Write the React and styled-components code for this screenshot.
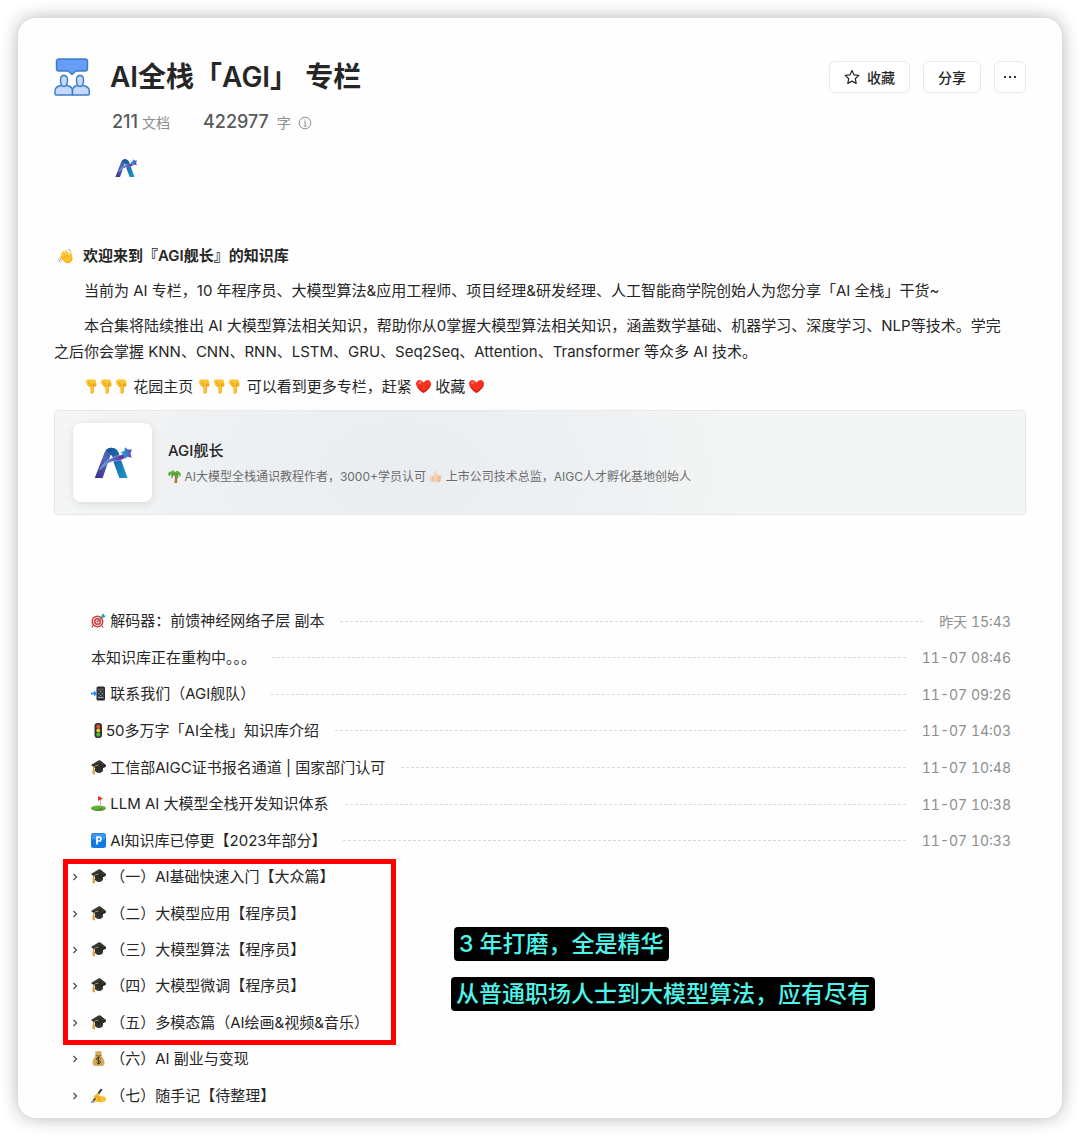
import React from 'react'
import styled, { createGlobalStyle } from 'styled-components'

const docs = [
  { icon: 'dart', title: ' 解码器：前馈神经网络子层 副本', time: '昨天 15:43' },
  { title: '本知识库正在重构中。。。', time: '11-07 08:46' },
  { icon: 'phone', title: ' 联系我们（AGI舰队）', time: '11-07 09:26' },
  { icon: 'light', title: '50多万字「AI全栈」知识库介绍', time: '11-07 14:03' },
  { icon: 'cap', title: ' 工信部AIGC证书报名通道 | 国家部门认可', time: '11-07 10:48' },
  { icon: 'golf', title: ' LLM AI 大模型全栈开发知识体系', time: '11-07 10:38' },
  { icon: 'parking', title: ' AI知识库已停更【2023年部分】', time: '11-07 10:33' },
]

const chapters = [
  { icon: 'cap', title: ' （一）AI基础快速入门【大众篇】' },
  { icon: 'cap', title: ' （二）大模型应用【程序员】' },
  { icon: 'cap', title: ' （三）大模型算法【程序员】' },
  { icon: 'cap', title: ' （四）大模型微调【程序员】' },
  { icon: 'cap', title: ' （五）多模态篇（AI绘画&视频&音乐）' },
  { icon: 'money', title: ' （六）AI 副业与变现' },
  { icon: 'write', title: ' （七）随手记【待整理】' },
]

// all emoji share a 30 x 30 grid
const emojis = {
  wave: {
    label: '挥手',
    art: (
      <>
        <path d="M8 15 L5 10 Q5 7 8 8 L12 13 L8 6 Q9 3 12 5 L18 12 L13 4 Q15 1 18 4 L24 13 L23 7 Q25 4 27 8 L29 18 Q29 25 23 28 Q17 30 12 25 L4 17 Q3 14 6 14 Z" fill="#fcc52f" />
        <path d="M12 13 L17 18 M18 12 L21 16 M8 15 L14 21" stroke="#d98c15" strokeWidth="1.4" fill="none" />
        <path d="M13 25 Q19 29 24 26 Q28 23 28 18" stroke="#e7a01f" strokeWidth="1.6" fill="none" />
        <path d="M20 1 Q25 1 26 5 M1 19 Q1 25 6 27 M4 18 Q5 22 8 24" stroke="#8f9aa3" strokeWidth="1.5" fill="none" />
      </>
    ),
  },
  down: {
    label: '向下',
    art: (
      <>
        <path d="M7 1 H22 Q24 4 25 9 V14 Q24 16 21 15 L19 15 V27 Q16 31 13 27 L12 16 Q7 15 5 10 L4 5 Q4 2 7 1 Z" fill="#fdc230" />
        <path d="M8 7 Q13 8 13 13 Q12 16 10 14 M19 9 V16 M22 9 V15" stroke="#d98a18" strokeWidth="1.5" fill="none" />
        <path d="M19 16 V27 Q16 30 13 27" stroke="#eda420" strokeWidth="1.5" fill="none" />
      </>
    ),
  },
  heart: {
    label: '爱心',
    art: (
      <>
        <path d="M15 28 Q0 18 0 9 Q1 2 7 2 Q12 2 15 7 Q18 2 23 2 Q29 2 30 9 Q30 18 15 28 Z" fill="#f5311f" />
        <path d="M4 9 Q4 5 8 5 Q11 5 12 7 Q9 11 4 9 Z" fill="#ff7566" />
        <path d="M15 28 Q30 18 30 9 Q25 20 15 24 Q7 21 2 15 Q5 22 15 28 Z" fill="#d91d13" />
      </>
    ),
  },
  palm: {
    label: '棕榈树',
    art: (
      <>
        <path d="M13 8 Q18 17 15 30 L21 30 Q23 17 17 8 Z" fill="#a9713f" />
        <path d="M15 7 Q8 -1 1 7 Q0 12 3 15 Q5 9 9 10 Q6 15 9 20 Q11 13 16 10 Q21 13 22 20 Q26 15 23 10 Q27 10 28 16 Q32 8 25 4 Q20 0 16 6 Q14 0 9 1 Z" fill="#45a32c" />
        <path d="M4 8 Q10 3 15 9 Q21 3 26 8" stroke="#7bc943" strokeWidth="1.5" fill="none" />
      </>
    ),
  },
  thumb: {
    label: '点赞',
    art: (
      <>
        <path d="M2 14 L9 13 L15 2 Q19 0 19 6 L18 11 L26 11 Q30 12 28 16 L27 26 Q26 29 22 29 L10 28 L2 27 Z" fill="#f8d3b4" />
        <path d="M18 16 L28 16 M18 20 L27 20 M18 24 L26 24 M9 14 L9 26" stroke="#d89f7a" strokeWidth="1.5" fill="none" />
      </>
    ),
  },
  dart: {
    label: '靶心',
    art: (
      <>
        <path d="M4 25 L2 29 M22 25 L24 29" stroke="#8b3a30" strokeWidth="2" />
        <circle cx="13" cy="17" r="12" fill="#d83a35" />
        <circle cx="13" cy="17" r="9" fill="#f2eeee" />
        <circle cx="13" cy="17" r="7" fill="#d83a35" />
        <circle cx="13" cy="17" r="4" fill="#f2eeee" />
        <circle cx="13" cy="17" r="2" fill="#d83a35" />
        <path d="M13 17 L24 7" stroke="#3a6b7b" strokeWidth="2" />
        <path d="M20 8 L22 3 L26 1 L26 5 L30 5 L27 9 L22 10 Z" fill="#35a6b8" />
      </>
    ),
  },
  phone: {
    label: '手机',
    art: (
      <>
        <rect x="11" y="1" width="17" height="28" rx="3" fill="#26282c" />
        <rect x="13" y="4" width="13" height="22" fill="#3d4148" />
        <path d="M0 13 H6 V9 L13 15 L6 21 V17 H0 Z" fill="#2b8ef0" />
        <path d="M15 7 h2 M21 7 h2" stroke="#e45b4f" strokeWidth="2" />
        <path d="M18 11 h2 M15 15 h2" stroke="#6cc86b" strokeWidth="2" />
        <path d="M22 15 h2 M18 19 h2" stroke="#4a9be8" strokeWidth="2" />
        <path d="M14 23 h11" stroke="#9aa0a8" strokeWidth="2" />
      </>
    ),
  },
  light: {
    label: '红绿灯',
    art: (
      <>
        <rect x="7" y="0" width="15" height="30" rx="6" fill="#35332f" />
        <circle cx="14.500" cy="7" r="4" fill="#ee4b3e" />
        <circle cx="14.500" cy="15" r="4" fill="#f6c22f" />
        <circle cx="14.500" cy="23" r="4" fill="#3fc13f" />
      </>
    ),
  },
  cap: {
    label: '学士帽',
    art: (
      <>
        <path d="M8 12 L8 22 Q12 27 17 26 Q23 25 24 21 L24 12 Z" fill="#34342f" />
        <path d="M0 10 L15 1 Q18 0 20 2 L30 10 Q31 13 29 14 L16 20 Q13 21 11 18 Z" fill="#2b2b29" />
        <path d="M3 10 L16 4 L27 11" stroke="#55554f" strokeWidth="1.2" fill="none" />
        <path d="M15 10 Q7 11 5 15 L5 21" stroke="#c98a3c" strokeWidth="2" fill="none" />
        <path d="M3 19 L8 19 L8 29 L3 28 Z" fill="#e0a045" />
      </>
    ),
  },
  golf: {
    label: '高尔夫',
    art: (
      <>
        <ellipse cx="15" cy="24" rx="15" ry="5" fill="#67b32e" />
        <path d="M0 24 Q2 30 15 30 Q28 30 30 24 Q25 27 15 27 Q5 27 0 24 Z" fill="#4a8d22" />
        <ellipse cx="19" cy="24" rx="3" ry="1.3" fill="#3a6a1d" />
        <path d="M19 1 V24" stroke="#b0b0b0" strokeWidth="1.6" />
        <path d="M14 0 L24 5 L14 10 Z" fill="#e3352b" />
      </>
    ),
  },
  parking: {
    label: '停车',
    art: (
      <>
        <rect x="0" y="0" width="30" height="30" rx="5" fill="#1378e4" />
        <rect x="1" y="1" width="28" height="12" rx="4" fill="#3c97f2" />
        <path d="M12 23 V8 H16 Q20 8 20 12 Q20 16 16 16 H12" stroke="#ffffff" strokeWidth="3.4" fill="none" />
      </>
    ),
  },
  money: {
    label: '钱袋',
    art: (
      <>
        <path d="M10 9 Q7 3 9 1 Q15 -1 21 1 Q23 4 20 9 Q27 16 27 24 Q27 30 21 30 H9 Q3 30 3 24 Q3 16 10 9 Z" fill="#d3ab5c" />
        <path d="M9 9 Q15 11 21 9" stroke="#7d5b22" strokeWidth="2" fill="none" />
        <path d="M19 15 Q17 13 15 13 Q11 13 11 16 Q11 19 15 19 Q19 20 19 22 Q19 25 15 25 Q12 25 11 23 M15 11 V27" stroke="#4b3714" strokeWidth="2" fill="none" />
      </>
    ),
  },
  write: {
    label: '书写',
    art: (
      <>
        <path d="M2 27 L18 3 Q21 0 23 3 L8 25 Z" fill="#3b3b3d" />
        <path d="M5 17 L12 11 Q17 9 17 13 L15 16 L27 17 Q31 20 30 25 Q24 30 16 28 L9 28 Q6 26 8 24 L12 23 L9 21 Q5 21 5 17 Z" fill="#fbbf2b" />
        <path d="M9 18 L15 18 M12 23 L18 23 M15 16 Q19 18 17 21" stroke="#d28a14" strokeWidth="1.4" fill="none" />
        <path d="M0 28 H7" stroke="#4b4b4d" strokeWidth="1.8" />
      </>
    ),
  },
}

function Emoji({ name }) {
  const { label, art } = emojis[name]
  return (
    <EmojiSvg viewBox="0 0 30 30" role="img" aria-label={label}>
      {art}
    </EmojiSvg>
  )
}

function Logo({ id, size }) {
  return (
    <LogoSvg viewBox="0 0 120 100" $size={size} role="img" aria-label="AGI舰长">
      <defs>
        <linearGradient id={id + 'Left'} x1="0" y1="1" x2="1" y2="0">
          <stop offset="0" stopColor="#3a2a8c" />
          <stop offset="0.5" stopColor="#5566b8" />
          <stop offset="1" stopColor="#0f5aa0" />
        </linearGradient>
        <linearGradient id={id + 'Right'} x1="0" y1="0" x2="1" y2="1">
          <stop offset="0" stopColor="#154f96" />
          <stop offset="1" stopColor="#1c97c6" />
        </linearGradient>
        <linearGradient id={id + 'Swoosh'} x1="0" y1="0" x2="1" y2="0">
          <stop offset="0" stopColor="#3fa7dd" />
          <stop offset="0.5" stopColor="#5b6cc4" />
          <stop offset="1" stopColor="#6c2494" />
        </linearGradient>
        <linearGradient id={id + 'Star'} x1="0" y1="0" x2="1" y2="0">
          <stop offset="0" stopColor="#28a9dc" />
          <stop offset="0.6" stopColor="#3b74c4" />
          <stop offset="1" stopColor="#7d3aa8" />
        </linearGradient>
      </defs>
      <path d="M2 99 L33 18 Q40 2 56 2 Q71 3 76 16 L82 30 L62 36 L53 24 L27 99 Z" fill={`url(#${id}Left)`} />
      <path d="M38 9 Q45 2 56 2 Q71 3 77 17 L106 98 L80 98 L61 46 L70 33 L54 22 Q46 20 38 9 Z" fill={`url(#${id}Right)`} />
      <path d="M18 72 Q36 38 70 29 Q84 27 92 22 Q101 33 91 39 Q78 45 60 45 Q38 50 18 72 Z" fill={`url(#${id}Swoosh)`} stroke="#ffffff" strokeWidth="1" />
      <path d="M98 1 L107 8 L120 8 L115 20 L119 34 L106 31 L95 38 L94 26 L84 16 L96 13 Z" fill={`url(#${id}Star)`} />
    </LogoSvg>
  )
}

function GroupIcon() {
  return (
    <GroupSvg viewBox="0 0 36 38" aria-hidden="true">
      <g stroke="#3b7dc4" strokeWidth="1.4" strokeLinejoin="round">
        <path d="M5 1 H31 Q33.500 1 33.500 3.500 V10.500 Q33.500 13 31 13 H22 L18 16.500 L14 13 H5 Q2.500 13 2.500 10.500 V3.500 Q2.500 1 5 1 Z" fill="#669df6" />
        <path d="M1 36 V33 Q1 28.500 7 27.500 H13 Q18.500 28.500 18.500 33 V37 H2 Q1 37 1 36 Z" fill="#c3dafe" />
        <path d="M18.500 37 V33 Q18.500 28.500 23 27.500 H29 Q35.300 28.500 35.300 33 V36 Q35.300 37 34.300 37 Z" fill="#c3dafe" />
        <path d="M6.500 22 Q6.500 17.500 10 17.500 Q13.500 17.500 13.500 22 Q13.500 28.500 10 28.500 Q6.500 28.500 6.500 22 Z" fill="#c3dafe" />
        <path d="M22.500 22 Q22.500 17.500 26 17.500 Q29.500 17.500 29.500 22 Q29.500 28.500 26 28.500 Q22.500 28.500 22.500 22 Z" fill="#c3dafe" />
      </g>
    </GroupSvg>
  )
}

export default function App() {
  return (
    <>
      <GlobalStyle />
      <Page>
        <Panel>
          <Header>
            <GroupIcon />
            <Title>AI全栈「AGI」 专栏</Title>
            <Actions>
              <Button>
                <svg width="16" height="16" viewBox="0 0 16 16" aria-hidden="true">
                  <path d="M8 1.500 L10 5.800 L14.800 6.400 L11.300 9.700 L12.200 14.400 L8 12.100 L3.800 14.400 L4.700 9.700 L1.200 6.400 L6 5.800 Z" fill="none" stroke="#262626" strokeWidth="1.200" strokeLinejoin="round" />
                </svg>
                收藏
              </Button>
              <Button>分享</Button>
              <IconButton aria-label="更多">
                <svg width="14" height="14" viewBox="0 0 14 14" aria-hidden="true">
                  <circle cx="2" cy="7" r="1.100" />
                  <circle cx="7" cy="7" r="1.100" />
                  <circle cx="12" cy="7" r="1.100" />
                </svg>
              </IconButton>
            </Actions>
          </Header>

          <Stats>
            <Stat>
              <strong>211</strong> 文档
            </Stat>
            <Stat>
              <strong>422977</strong>&nbsp; 字
              <InfoSvg viewBox="0 0 14 14" aria-hidden="true">
                <circle cx="7" cy="7" r="5.800" />
                <path d="M6 6 H7.200 V10 M5.700 10 H8.600 M7 3.600 V4.700" />
              </InfoSvg>
            </Stat>
          </Stats>
          <Members>
            <Logo id="member" size={22} />
          </Members>

          <Article>
            <Welcome>
              <Emoji name="wave" />
              欢迎来到『AGI舰长』的知识库
            </Welcome>
            <Paragraph>当前为 AI 专栏，10 年程序员、大模型算法&应用工程师、项目经理&研发经理、人工智能商学院创始人为您分享「AI 全栈」干货~</Paragraph>
            <Paragraph>本合集将陆续推出 AI 大模型算法相关知识，帮助你从0掌握大模型算法相关知识，涵盖数学基础、机器学习、深度学习、NLP等技术。学完之后你会掌握 KNN、CNN、RNN、LSTM、GRU、Seq2Seq、Attention、Transformer 等众多 AI 技术。</Paragraph>
            <Paragraph>
              <Emoji name="down" /><Emoji name="down" /><Emoji name="down" /> 花园主页 <Emoji name="down" /><Emoji name="down" /><Emoji name="down" /> 可以看到更多专栏，赶紧 <Emoji name="heart" /> 收藏 <Emoji name="heart" />
            </Paragraph>
          </Article>

          <ProfileCard href="#profile">
            <Avatar>
              <Logo id="profile" size={38} />
            </Avatar>
            <ProfileInfo>
              <Nickname>AGI舰长</Nickname>
              <Intro>
                <Emoji name="palm" /> AI大模型全栈通识教程作者，3000+学员认可 <Emoji name="thumb" /> 上市公司技术总监，AIGC人才孵化基地创始人
              </Intro>
            </ProfileInfo>
          </ProfileCard>

          <DocList>
            {docs.map((doc) => (
              <DocRow key={doc.title}>
                <DocLink href="#doc">
                  {doc.icon && <Emoji name={doc.icon} />}
                  {doc.title}
                </DocLink>
                <Dashes />
                <Time>{doc.time}</Time>
              </DocRow>
            ))}
          </DocList>

          <ChapterArea>
            <ChapterList>
              {chapters.map((chapter) => (
                <ChapterRow key={chapter.title}>
                  <Toggle aria-label="展开">
                    <svg width="6" height="8" viewBox="0 0 6 8" aria-hidden="true">
                      <path d="M1.500 1 L4.500 4 L1.500 7" fill="none" stroke="#4a4a4a" strokeWidth="1.200" />
                    </svg>
                  </Toggle>
                  <DocLink href="#chapter">
                    <Emoji name={chapter.icon} />
                    {chapter.title}
                  </DocLink>
                </ChapterRow>
              ))}
            </ChapterList>
            <Frame />
            <Note $left={400} $top={68}>3 年打磨，全是精华</Note>
            <Note $left={397} $top={118}>从普通职场人士到大模型算法，应有尽有</Note>
          </ChapterArea>
        </Panel>
      </Page>
    </>
  )
}

const GlobalStyle = createGlobalStyle`
  * {
    box-sizing: border-box;
  }
  body {
    margin: 0;
    background: #ffffff;
    color: #262626;
    font-family: Inter, "Noto Sans CJK SC", sans-serif;
    font-size: 15px;
  }
  a {
    color: inherit;
    text-decoration: none;
  }
`
const Page = styled.main`
  padding: 18px;
`
const Panel = styled.div`
  padding: 40px 36px 4px;
  background: #fefefe;
  border-radius: 18px;
  box-shadow: 0 0 18px rgba(0, 0, 0, 0.3);
`
const Header = styled.header`
  display: flex;
  align-items: center;
`
const GroupSvg = styled.svg`
  width: 36px;
  height: 38px;
  margin-right: 20px;
`
const Title = styled.h1`
  flex: 1;
  margin: 0;
  font-size: 28px;
  font-weight: 600;
  line-height: 38px;
`
const Actions = styled.div`
  display: flex;
  gap: 13px;
`
const Button = styled.button`
  display: flex;
  align-items: center;
  gap: 7px;
  height: 32px;
  padding: 0 14px;
  background: #ffffff;
  border: 1px solid #e7e9e8;
  border-radius: 6px;
  color: #262626;
  font-family: inherit;
  font-size: 14px;
  font-weight: 500;
`
const IconButton = styled(Button)`
  justify-content: center;
  width: 32px;
  padding: 0;
`
const Stats = styled.div`
  display: flex;
  gap: 33px;
  margin-top: 14px;
  padding-left: 58px;
`
const Stat = styled.div`
  color: #8a8f8d;
  font-size: 14px;
  line-height: 24px;

  strong {
    color: #585a5a;
    font-size: 18px;
    font-weight: 500;
  }
`
const InfoSvg = styled.svg`
  width: 14px;
  height: 14px;
  margin-left: 7px;
  vertical-align: -2px;
  fill: none;
  stroke: #8a8f8d;
`
const Members = styled.div`
  display: flex;
  align-items: center;
  height: 24px;
  margin-top: 21px;
  padding-left: 61px;
`
const LogoSvg = styled.svg`
  width: ${({ $size }) => $size}px;
`
const EmojiSvg = styled.svg`
  width: 15px;
  height: 15px;
  vertical-align: -2px;
`
const Article = styled.article`
  display: flex;
  flex-direction: column;
  gap: 9px;
  margin-top: 63px;
  padding-right: 12px;
  line-height: 26px;
`
const Welcome = styled.h2`
  display: flex;
  align-items: center;
  gap: 10px;
  margin: 0;
  padding-left: 4px;
  font-size: 15px;
  font-weight: 600;
`
const Paragraph = styled.p`
  margin: 0;
  text-indent: 30px;
`
const ProfileCard = styled.a`
  display: flex;
  align-items: center;
  gap: 16px;
  margin-top: 10px;
  padding: 12px 18px;
  background: radial-gradient(ellipse 340px 220px at 36% 60%, #e9edf1, #eff1f3 70%, #f4f6f5);
  border: 1px solid #e7e9e8;
  border-radius: 4px;
`
const Avatar = styled.div`
  display: flex;
  align-items: center;
  justify-content: center;
  width: 79px;
  height: 79px;
  background: #ffffff;
  border-radius: 8px;
  box-shadow: 0 2px 8px rgba(0, 0, 0, 0.1);
`
const ProfileInfo = styled.div`
  display: flex;
  flex-direction: column;
  gap: 4px;
`
const Nickname = styled.div`
  font-weight: 500;
  line-height: 24px;
`
const Intro = styled.div`
  color: #6b6d6c;
  font-size: 12px;
  line-height: 20px;

  ${EmojiSvg} {
    width: 13px;
    height: 13px;
  }
`
const DocList = styled.ul`
  display: grid;
  grid-auto-rows: 1fr;
  min-height: 256px;
  margin: 88px 0 0;
  padding: 0 15px 0 37px;
  list-style: none;
`
const DocRow = styled.li`
  display: flex;
  align-items: center;
`
const DocLink = styled.a`
  white-space: pre;
  line-height: 24px;
`
const Dashes = styled.span`
  flex: 1;
  margin: 0 16px;
  border-top: 1px dashed #d8dad9;
`
const Time = styled.time`
  color: #8a8f8d;
  font-size: 14px;
  font-variant-numeric: tabular-nums;
`
const ChapterArea = styled.section`
  position: relative;
`
const ChapterList = styled.ul`
  display: grid;
  grid-auto-rows: 1fr;
  min-height: 255px;
  margin: 0;
  padding: 0 15px 0 18px;
  list-style: none;
`
const ChapterRow = styled.li`
  display: flex;
  align-items: center;
  gap: 13px;
`
const Toggle = styled.button`
  display: flex;
  padding: 0;
  background: none;
  border: 0;
`
const Frame = styled.div`
  position: absolute;
  top: 0;
  left: 9px;
  width: 333px;
  height: 186px;
  border: 5px solid #fe0000;
  pointer-events: none;
`
const Note = styled.div`
  position: absolute;
  top: ${({ $top }) => $top}px;
  left: ${({ $left }) => $left}px;
  padding: 0 5px;
  background: #000000;
  border-radius: 4px;
  color: #4ff5ea;
  font-size: 23px;
  font-weight: 500;
  line-height: 34px;
  white-space: nowrap;
`
